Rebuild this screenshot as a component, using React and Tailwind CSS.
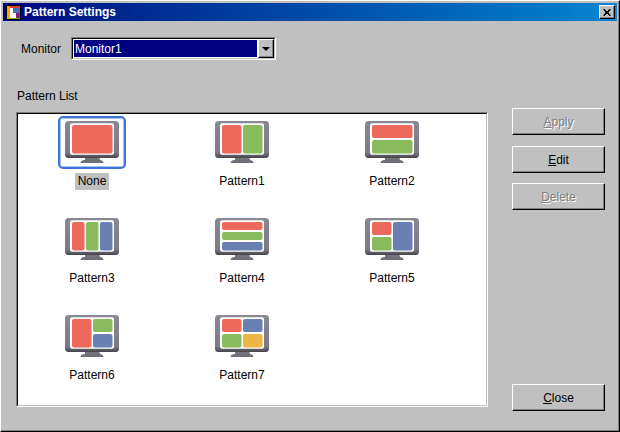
import React from 'react';

const RED = '#ec695c';
const GREEN = '#89ba5b';
const BLUE = '#6b80b2';
const YELLOW = '#ebb744';

// cells are [x, y, w, h, colour] in the 54x42 monitor drawing
const patterns = [
  { name: 'None', cells: [[7, 4, 40.5, 28.5, RED]] },
  { name: 'Pattern1', cells: [[7, 4, 19.5, 28.5, RED], [28, 4, 19.5, 28.5, GREEN]] },
  { name: 'Pattern2', cells: [[7, 4, 40.5, 13, RED], [7, 19, 40.5, 13.5, GREEN]] },
  { name: 'Pattern3', cells: [[7, 4, 12.5, 28.5, RED], [21, 4, 12.5, 28.5, GREEN], [35, 4, 12.5, 28.5, BLUE]] },
  { name: 'Pattern4', cells: [[7, 4, 40.5, 8, RED], [7, 14, 40.5, 8, GREEN], [7, 24, 40.5, 8.5, BLUE]] },
  { name: 'Pattern5', cells: [[7, 4, 19.5, 13, RED], [7, 19, 19.5, 13.5, GREEN], [28, 4, 19.5, 28.5, BLUE]] },
  { name: 'Pattern6', cells: [[7, 4, 19.5, 28.5, RED], [28, 4, 19.5, 13, GREEN], [28, 19, 19.5, 13.5, BLUE]] },
  { name: 'Pattern7', cells: [[7, 4, 19.5, 13, RED], [28, 4, 19.5, 13, BLUE], [7, 19, 19.5, 13.5, GREEN], [28, 19, 19.5, 13.5, YELLOW]] },
];

const MonitorIcon = ({ cells }) => (
  <svg width="54" height="42" viewBox="0 0 54 42" className="block">
    <defs>
      <linearGradient id="bezel" x1="0" y1="0" x2="0" y2="1">
        <stop offset="0" stopColor="#8a8892" />
        <stop offset="0.85" stopColor="#7c7a85" />
        <stop offset="1" stopColor="#44434a" />
      </linearGradient>
    </defs>
    <path d="M20 35h14l1 4H20z" fill="#75737d" />
    <path d="M15.5 42c0-2 2-3 4-3h15c2 0 4 1 4 3z" fill="#706e78" />
    <rect x="0" y="0" width="54" height="37" rx="3.5" fill="url(#bezel)" />
    <rect x="5" y="2.3" width="44" height="31.5" rx="2" fill="#fff" />
    {cells.map(([x, y, w, h, color], i) => (
      <rect key={i} x={x} y={y} width={w} height={h} rx="2" fill={color} />
    ))}
  </svg>
);

const LogoIcon = () => (
  <svg width="15" height="15" viewBox="0 0 15 15" className="block shrink-0">
    <rect width="15" height="15" fill="#000" />
    <rect x="1" y="1" width="13" height="2" fill="#e8382c" />
    <rect x="1" y="1" width="3" height="13" fill="#f5a800" />
    <rect x="4" y="3" width="10" height="10" fill="#fff" />
    <rect x="7" y="3" width="7" height="5" fill="#4a6fb5" />
    <rect x="10" y="8" width="4" height="5" fill="#8a1a8a" />
    <rect x="4" y="13" width="10" height="1" fill="#6fb52c" />
  </svg>
);

const Button = ({ letter, rest, disabled, className = '' }) => (
  <button
    type="button"
    className={`flex h-[27px] w-[93px] items-center justify-center border border-t-white border-l-white border-r-black border-b-black bg-[#c0c0c0] text-[12px] shadow-[inset_-1px_-1px_0_#808080] ${
      disabled ? 'text-[#808080] [text-shadow:1px_1px_0_#fff]' : 'text-black'
    } ${className}`}
  >
    <span>
      <span className="underline">{letter}</span>
      {rest}
    </span>
  </button>
);

const App = () => {
  return (
    <div className="flex h-[432px] w-[620px] flex-col border border-t-white border-l-white border-r-black border-b-black bg-[#c0c0c0] font-['Liberation_Sans',Arial,sans-serif] text-[12px] text-black shadow-[inset_-1px_-1px_0_#808080] p-[2px]">
      {/* title bar */}
      <div className="flex h-[18px] shrink-0 items-center bg-gradient-to-r from-[#000080] to-[#1084d0] pl-[3px] pr-[2px]">
        <LogoIcon />
        <span className="ml-[3px] text-[12px] font-bold text-white">Pattern Settings</span>
        <div className="ml-auto flex h-[14px] w-[16px] items-center justify-center border border-t-white border-l-white border-r-black border-b-black bg-[#c0c0c0] shadow-[inset_-1px_-1px_0_#808080]">
          <svg width="8" height="7" viewBox="0 0 8 7" className="block">
            <path d="M0 0h2v1h1v1h2V1h1V0h2L5.5 3.5 8 7H6V6H5V5H3v1H2v1H0l2.5-3.5z" fill="#000" />
          </svg>
        </div>
      </div>

      {/* monitor row */}
      <div className="ml-[18px] mt-[16px] flex h-[23px] items-center">
        <span className="w-[50px]">Monitor</span>
        <div className="flex h-[23px] w-[205px] border border-t-[#808080] border-l-[#808080] border-r-white border-b-white">
          <div className="flex flex-1 border border-t-black border-l-black border-r-[#c0c0c0] border-b-[#c0c0c0]">
            <div className="flex h-full flex-1 items-center border border-white bg-[#000080] pl-[1px] text-white">
              Monitor1
            </div>
            <div className="flex w-[16px] items-center justify-center border border-t-white border-l-white border-r-black border-b-black bg-[#c0c0c0] shadow-[inset_-1px_-1px_0_#808080]">
              <svg width="8" height="4" viewBox="0 0 8 4" className="block">
                <path d="M0 0h8L4 4z" fill="#000" />
              </svg>
            </div>
          </div>
        </div>
      </div>

      {/* list and buttons */}
      <div className="ml-[13px] mt-[28px] flex h-[323px] gap-[24px]">
        <div className="flex w-[472px] flex-col">
          <div className="ml-[1px] mt-[1px] h-[14px] leading-[14px]">Pattern List</div>
          <div className="mt-[9px] h-[295px] border border-t-[#808080] border-l-[#808080] border-r-white border-b-white">
            <div className="h-full border border-t-black border-l-black border-r-[#c0c0c0] border-b-[#c0c0c0] bg-white pt-[2px]">
              <div className="-ml-px grid grid-cols-[repeat(3,150px)] gap-y-[23px]">
                {patterns.map((p, i) => (
                  <div key={p.name} className="flex flex-col items-center">
                    <div
                      className={`flex h-[53px] w-[68px] justify-center rounded-[5px] border-2 pt-[3px] ${
                        i === 0 ? 'border-[#3f74d9] shadow-[inset_0_0_0_1px_#a9c2ee]' : 'border-transparent'
                      }`}
                    >
                      <MonitorIcon cells={p.cells} />
                    </div>
                    <span
                      className={`mt-[4px] h-[17px] px-[3px] leading-[17px] ${
                        i === 0 ? 'bg-[#c0c0c0]' : ''
                      }`}
                    >
                      {p.name}
                    </span>
                  </div>
                ))}
              </div>
            </div>
          </div>
        </div>
        <div className="flex flex-col pt-[20px]">
          <Button letter="A" rest="pply" disabled />
          <Button letter="E" rest="dit" className="mt-[11px]" />
          <Button letter="D" rest="elete" disabled className="mt-[10px]" />
          <Button letter="C" rest="lose" className="mt-auto" />
        </div>
      </div>
    </div>
  );
};

export default App;
